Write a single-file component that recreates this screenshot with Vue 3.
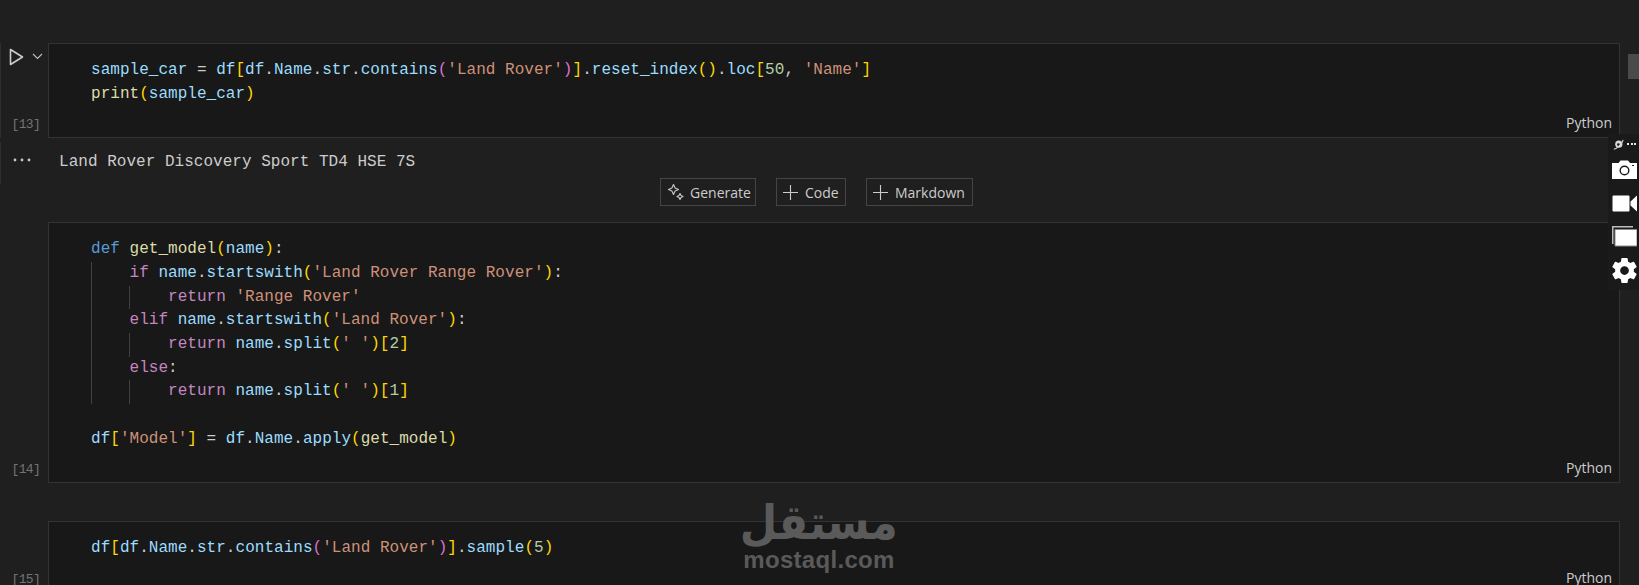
<script setup>
const T = (c, t) => ({ c, t })
const v = (t) => T('v', t), p = (t) => T('p', t), s = (t) => T('s', t), g = (t) => T('g', t), m = (t) => T('m', t)
const k = (t) => T('k', t), d = (t) => T('d', t), f = (t) => T('f', t), n = (t) => T('n', t)

const cell1 = [
  { toks: [v('sample_car'), p(' = '), v('df'), g('['), v('df'), p('.'), v('Name'), p('.'), v('str'), p('.'), v('contains'), m('('), s("'Land Rover'"), m(')'), g(']'), p('.'), v('reset_index'), g('()'), p('.'), v('loc'), g('['), n('50'), p(', '), s("'Name'"), g(']')] },
  { toks: [f('print'), g('('), v('sample_car'), g(')')] }
]
const cell2 = [
  { toks: [d('def'), p(' '), f('get_model'), g('('), v('name'), g(')'), p(':')] },
  { guides: 1, toks: [k('if'), p(' '), v('name'), p('.'), v('startswith'), g('('), s("'Land Rover Range Rover'"), g(')'), p(':')] },
  { guides: 2, toks: [k('return'), p(' '), s("'Range Rover'")] },
  { guides: 1, toks: [k('elif'), p(' '), v('name'), p('.'), v('startswith'), g('('), s("'Land Rover'"), g(')'), p(':')] },
  { guides: 2, toks: [k('return'), p(' '), v('name'), p('.'), v('split'), g('('), s("' '"), g(')['), n('2'), g(']')] },
  { guides: 1, toks: [k('else'), p(':')] },
  { guides: 2, toks: [k('return'), p(' '), v('name'), p('.'), v('split'), g('('), s("' '"), g(')['), n('1'), g(']')] },
  { toks: [p(' ')] },
  { toks: [v('df'), g('['), s("'Model'"), g(']'), p(' = '), v('df'), p('.'), v('Name'), p('.'), v('apply'), g('('), f('get_model'), g(')')] }
]
const cell3 = [
  { toks: [v('df'), g('['), v('df'), p('.'), v('Name'), p('.'), v('str'), p('.'), v('contains'), m('('), s("'Land Rover'"), m(')'), g(']'), p('.'), v('sample'), g('('), n('5'), g(')')] }
]
const cells = [
  { id: 14, lines: cell2 },
  { id: 15, lines: cell3 }
]
</script>

<template>
  <div class="page">
    <section class="cell first">
      <div class="gutter">
        <div class="run">
          <svg class="play" width="15" height="18" viewBox="0 0 15 18"><path d="M1.500 1.500v15L13.500 9z" fill="none" stroke="#cccccc" stroke-width="1.600" stroke-linejoin="round"/></svg>
          <svg class="chev" width="11" height="7" viewBox="0 0 11 7"><path d="M1 1l4.500 4.500L10 1" fill="none" stroke="#bdbdbd" stroke-width="1.100"/></svg>
        </div>
        <span class="count">[13]</span>
      </div>
      <div class="editor">
        <div v-for="(line, i) in cell1" :key="i" class="line">
          <span v-for="(tok, j) in line.toks" :key="j" :class="tok.c">{{ tok.t }}</span>
        </div>
        <div class="lang">Python</div>
      </div>
    </section>

    <div class="output">
      <span class="dots"><svg width="18" height="4" viewBox="0 0 18 4" fill="#c8c8c8"><circle cx="2" cy="2" r="1.400"/><circle cx="9" cy="2" r="1.400"/><circle cx="16" cy="2" r="1.400"/></svg></span>
      <span class="out-text">Land Rover Discovery Sport TD4 HSE 7S</span>
    </div>

    <div class="toolbar">
      <button class="btn gen">
        <svg width="18" height="18" viewBox="0 0 18 18" fill="none" stroke="#cccccc" stroke-width="1.100" stroke-linejoin="round"><path d="M6.500 1.500l1.600 3.400 3.400 1.600-3.400 1.600-1.600 3.400-1.600-3.400L1.500 6.500l3.400-1.600z"/><path d="M13 10.500l1 2 2 1-2 1-1 2-1-2-2-1 2-1z"/></svg>
        Generate
      </button>
      <button class="btn code">
        <svg width="15" height="15" viewBox="0 0 15 15"><path d="M7.500 0v15M0 7.500h15" stroke="#cccccc" stroke-width="1.100"/></svg>
        Code
      </button>
      <button class="btn md">
        <svg width="15" height="15" viewBox="0 0 15 15"><path d="M7.500 0v15M0 7.500h15" stroke="#cccccc" stroke-width="1.100"/></svg>
        Markdown
      </button>
    </div>

    <section v-for="cell in cells" :key="cell.id" class="cell">
      <div class="gutter end">
        <span class="count">[{{ cell.id }}]</span>
      </div>
      <div class="editor">
        <div v-for="(line, i) in cell.lines" :key="i" class="line">
          <i v-if="line.guides >= 1" class="guide g1"></i>
          <i v-if="line.guides >= 2" class="guide g2"></i>
          <span class="content" :class="'indent' + (line.guides || 0)">
            <span v-for="(tok, j) in line.toks" :key="j" :class="tok.c">{{ tok.t }}</span>
          </span>
        </div>
        <div class="lang">Python</div>
      </div>
    </section>

    <div class="thumb"></div>

    <aside class="float">
      <div class="float-top">
        <svg width="11" height="11" viewBox="0 0 11 11"><circle cx="5.800" cy="5.200" r="3.600" fill="#d8d8d8"/><circle cx="5.400" cy="5.600" r="1.400" fill="#1a1a1a"/><path d="M.8 10.200C4 9.500 9 5 10.200.8" fill="none" stroke="#d8d8d8" stroke-width="1.100"/></svg>
        <span class="mini-dots"><b></b><b></b><b></b></span>
      </div>
      <svg class="fi cam" width="25" height="19" viewBox="0 0 25 19"><path d="M0 3h6.500L8.500 .5h7.500L18 3h7v16H0z" fill="#fff"/><circle cx="12.500" cy="10.500" r="4.300" fill="none" stroke="#1a1a1a" stroke-width="1.400"/><rect x="20" y="5" width="2" height="1" fill="#1a1a1a"/></svg>
      <svg class="fi vid" width="25" height="17" viewBox="0 0 25 17"><path d="M1.500 .5h15a1 1 0 0 1 1 1v14a1 1 0 0 1-1 1h-15a1 1 0 0 1-1-1v-14a1 1 0 0 1 1-1zM18.500 6.500L25 .5v16l-6.500-6z" fill="#fff"/></svg>
      <svg class="fi win" width="25" height="21" viewBox="0 0 25 21"><path d="M0 0h21v1.500H1.500V18H0z" fill="#bdbdbd"/><path d="M3 3.500h22V20H3z" fill="#fff" stroke="#8a8a8a" stroke-width="1"/></svg>
      <svg class="fi gear" width="25" height="25" viewBox="2 2 20 20"><path fill="#fff" fill-rule="evenodd" d="M19.430 12.980c.04-.32.07-.64.07-.98s-.03-.66-.07-.98l2.110-1.650a.5.5 0 0 0 .12-.64l-2-3.460a.5.5 0 0 0-.61-.22l-2.490 1a7.300 7.300 0 0 0-1.690-.98l-.38-2.650A.49.49 0 0 0 14 2h-4a.49.49 0 0 0-.49.42l-.38 2.650c-.61.25-1.170.59-1.690.98l-2.490-1a.49.49 0 0 0-.61.22l-2 3.460a.49.49 0 0 0 .12.64l2.110 1.650c-.04.32-.07.65-.07.98s.03.66.07.98l-2.110 1.650a.5.5 0 0 0-.12.64l2 3.460c.12.22.39.3.61.22l2.490-1c.52.4 1.080.73 1.690.98l.38 2.650c.03.24.24.42.49.42h4c.25 0 .46-.18.49-.42l.38-2.650c.61-.25 1.170-.59 1.690-.98l2.490 1c.23.09.49 0 .61-.22l2-3.460a.5.500 0 0 0-.12-.64zM12 15.500a3.500 3.500 0 1 1 0-7 3.500 3.500 0 0 1 0 7z"/></svg>
    </aside>

    <div class="mark">
      <span class="mark-ar">مستقل</span>
      <span class="mark-en">mostaql.com</span>
    </div>
  </div>
</template>

<style>
html, body { margin: 0; background: #1f1f1f; }
</style>

<style scoped>
.page {
  position: relative;
  height: 585px;
  overflow: hidden;
  background: #1f1f1f;
  padding-top: 43px;
  box-sizing: border-box;
  font-family: "Liberation Mono", monospace;
  font-size: 16px;
}
.cell { display: flex; margin-bottom: 38px; width: 1620px; }
.cell.first { margin-bottom: 0; border-left: 1px solid #2e2e2e; width: 1619px; }
.gutter {
  width: 48px;
  flex: none;
  box-sizing: border-box;
  display: flex;
  flex-direction: column;
  justify-content: space-between;
  padding: 5px 8px 5px 0;
  align-items: flex-end;
}
.first .gutter { width: 47px; }
.gutter.end { justify-content: flex-end; }
.run { display: flex; align-items: center; gap: 8px; margin-right: -3px; }
.chev { margin-top: -2px; }
.count { color: #737373; font-size: 13px; letter-spacing: -.7px; line-height: 16px; }
.editor {
  flex: 1;
  box-sizing: border-box;
  background: #181818;
  border: 1px solid #333333;
  padding: 15px 6px 2px 42px;
  min-width: 0;
}
.line { position: relative; height: 23.670px; line-height: 23.670px; white-space: pre; color: #cccccc; letter-spacing: .025px; }
.guide { position: absolute; top: 0; bottom: 0; width: 1px; background: #404040; }
.g1 { left: 0; }
.g2 { left: 38px; }
.indent1 { padding-left: 38.500px; }
.indent2 { padding-left: 77px; }
.lang {
  margin-top: 6px;
  margin-right: 1px;
  height: 23px;
  line-height: 21px;
  text-align: right;
  font-family: "Open Sans", sans-serif;
  font-size: 14px;
  color: #cccccc;
}
.v { color: #9cdcfe; }
.p { color: #cccccc; }
.s { color: #ce9178; }
.g { color: #ffd700; }
.m { color: #da70d6; }
.k { color: #c586c0; }
.d { color: #569cd6; }
.f { color: #dcdcaa; }
.n { color: #b5cea8; }

.output {
  margin-top: 4px;
  margin-bottom: -6px;
  height: 42px;
  box-sizing: border-box;
  border-left: 1px solid #2e2e2e;
  padding-top: 8px;
  display: flex;
  line-height: 24px;
  color: #cccccc;
}
.dots { width: 58px; flex: none; padding: 8px 0 0 12px; box-sizing: border-box; line-height: 0; }
.out-text { white-space: pre; letter-spacing: .025px; }

.toolbar {
  width: 1633px;
  display: flex;
  justify-content: center;
  gap: 20px;
  margin-bottom: 16px;
}
.btn {
  height: 28px;
  box-sizing: border-box;
  display: flex;
  align-items: center;
  background: transparent;
  border: 1px solid #454545;
  color: #cccccc;
  font-family: "Open Sans", sans-serif;
  font-size: 14px;
  padding: 0 4px 0 6px;
  gap: 7px;
}
.gen { width: 96px; gap: 5px; }
.code { width: 70px; }
.md { width: 107px; }
.btn svg { flex: none; }

.thumb { position: absolute; left: 1628px; top: 54px; width: 11px; height: 25px; background: #4a4a4a; }

.float {
  position: absolute;
  left: 1608px;
  top: 134px;
  width: 31px;
  height: 156px;
  background: #1a1a1a;
  box-sizing: border-box;
  padding: 4px 2px 0 4px;
  display: flex;
  flex-direction: column;
  align-items: flex-start;
}
.float-top { display: flex; align-items: center; gap: 3px; height: 12px; margin-left: 1px; }
.mini-dots { display: flex; gap: 1.500px; }
.mini-dots b { width: 2px; height: 2px; background: #e6e6e6; display: block; }
.fi { display: block; flex: none; }
.cam { margin-top: 10px; }
.vid { margin-top: 16px; }
.win { margin-top: 14px; }
.gear { margin-top: 11px; }

.mark {
  position: absolute;
  left: 743px;
  top: 497px;
  width: 152px;
  display: flex;
  flex-direction: column;
  align-items: center;
  color: #5a5a5a;
  pointer-events: none;
}
.mark-ar { font-family: "DejaVu Sans", sans-serif; font-weight: bold; font-size: 48px; line-height: 50px; transform: scaleX(.9); white-space: nowrap; }
.mark-en { font-family: "Liberation Sans", sans-serif; font-weight: bold; font-size: 24px; line-height: 26px; letter-spacing: .3px; }
</style>
